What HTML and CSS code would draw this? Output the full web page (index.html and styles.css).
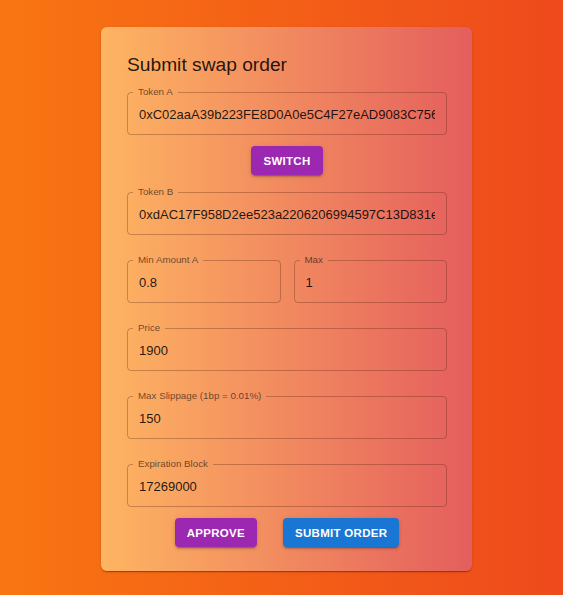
FILE: index.html
```html
<!DOCTYPE html>
<html>
<head>
<meta charset="utf-8">
<link rel="stylesheet" href="styles.css">
</head>
<body>
<div class="page">
  <div class="card">
    <h1 class="title">Submit swap order</h1>
    <fieldset class="field">
      <legend>Token A</legend>
      <input class="input" value="0xC02aaA39b223FE8D0A0e5C4F27eAD9083C756Cc2">
    </fieldset>
    <div class="center-row">
      <button class="btn btn-purple">Switch</button>
    </div>
    <fieldset class="field">
      <legend>Token B</legend>
      <input class="input" value="0xdAC17F958D2ee523a2206206994597C13D831ec7">
    </fieldset>
    <div class="pair">
      <fieldset class="field">
        <legend>Min Amount A</legend>
        <input class="input" value="0.8">
      </fieldset>
      <fieldset class="field">
        <legend>Max</legend>
        <input class="input" value="1">
      </fieldset>
    </div>
    <fieldset class="field">
      <legend>Price</legend>
      <input class="input" value="1900">
    </fieldset>
    <fieldset class="field">
      <legend>Max Slippage (1bp = 0.01%)</legend>
      <input class="input" value="150">
    </fieldset>
    <fieldset class="field">
      <legend>Expiration Block</legend>
      <input class="input" value="17269000">
    </fieldset>
    <div class="center-row actions">
      <button class="btn btn-purple">Approve</button>
      <button class="btn btn-blue">Submit order</button>
    </div>
  </div>
</div>
</body>
</html>
```

FILE: styles.css
```css
html, body {
  margin: 0;
  padding: 0;
  height: 100%;
}
body {
  font-family: "Liberation Sans", Arial, sans-serif;
  background: linear-gradient(to right, #f97512, #ee4a1c);
}
.page {
  display: flex;
  align-items: flex-start;
  padding: 27px 0 0 101px;
}
.card {
  box-sizing: border-box;
  width: 371px;
  padding: 26px 25px 24px 26px;
  border-radius: 6px;
  background: linear-gradient(to right, #feb562, #e45e5d);
  box-shadow: 0 2px 1px -1px rgba(0,0,0,0.2), 0 1px 1px 0 rgba(0,0,0,0.14), 0 1px 3px 0 rgba(0,0,0,0.12);
  display: flex;
  flex-direction: column;
  gap: 19px;
}
.title {
  margin: 0 0 -10px 0;
  font-size: 19.2px;
  font-weight: 400;
  line-height: 24px;
  color: rgba(0,0,0,0.87);
}
.field {
  margin: 0;
  padding: 0 11px 4px 11px;
  min-width: 0;
  border: 1px solid rgba(80,30,10,0.3);
  border-radius: 4px;
  display: flex;
  flex-direction: column;
}
.field legend {
  margin-left: -6px;
  padding: 0 5px;
  font-size: 9.75px;
  line-height: 12px;
  color: rgba(0,0,0,0.6);
}
.input {
  display: block;
  box-sizing: border-box;
  width: 100%;
  height: 32px;
  margin: 0;
  padding: 0;
  border: 0;
  outline: none;
  background: transparent;
  font-family: "Liberation Sans", Arial, sans-serif;
  font-size: 13px;
  color: rgba(0,0,0,0.87);
}
.center-row {
  display: flex;
  justify-content: center;
  gap: 26px;
  margin: -8px 0;
}
.actions {
  margin: -8px 0 0 0;
}
.pair {
  display: grid;
  grid-template-columns: 1fr 1fr;
  gap: 13px;
}
.btn {
  height: 29px;
  padding: 0 12px;
  border: 0;
  border-radius: 4px;
  font-family: "Liberation Sans", Arial, sans-serif;
  font-size: 11.5px;
  font-weight: 700;
  letter-spacing: 0.3px;
  text-transform: uppercase;
  color: #fff;
  box-shadow: 0 3px 1px -2px rgba(0,0,0,0.2), 0 2px 2px 0 rgba(0,0,0,0.14), 0 1px 5px 0 rgba(0,0,0,0.12);
}
.btn-purple {
  background: #9c27b0;
}
.btn-blue {
  background: #1976d2;
}
```
